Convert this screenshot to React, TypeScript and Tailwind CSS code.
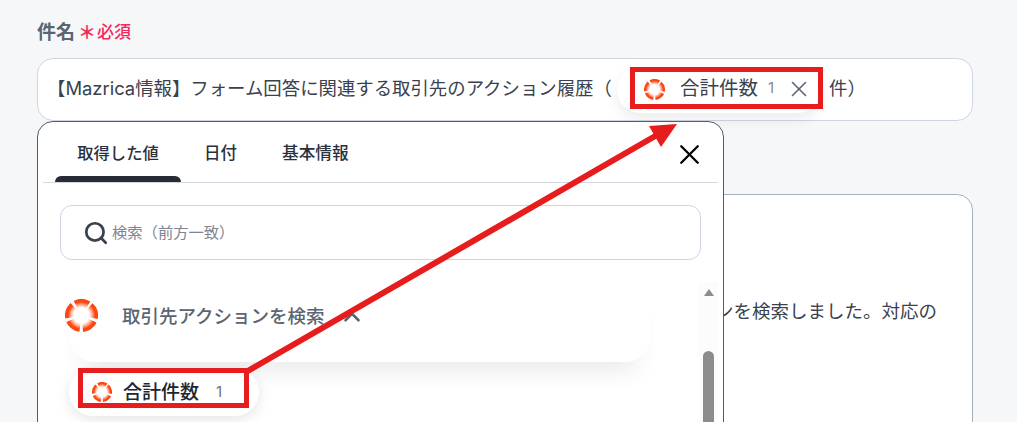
import React from 'react';
import { ChevronUp, Search, X } from 'lucide-react';

const Logo: React.FC<{ size: number; id: string }> = ({ size, id }) => (
  <svg width={size} height={size} viewBox="0 0 100 100" className="shrink-0">
    <defs>
      <radialGradient id={id} gradientUnits="userSpaceOnUse" cx="50" cy="50" r="50">
        <stop offset="0.5" stopColor="#fff3ee" />
        <stop offset="0.66" stopColor="#ffa88e" />
        <stop offset="0.82" stopColor="#ff4510" />
      </radialGradient>
    </defs>
    <circle
      cx="50"
      cy="50"
      r="37"
      fill="none"
      stroke={`url(#${id})`}
      strokeWidth="26"
      strokeDasharray="38.5 8"
      transform="rotate(-48 50 50)"
    />
  </svg>
);

const App: React.FC = () => {
  return (
    <div className="relative h-[422px] w-[1017px] overflow-hidden bg-[#f6f7f9] pl-[37px] pr-[44px] pt-[19px] font-['Inter','Noto_Sans_CJK_JP',sans-serif] text-[#39414e]">
      <div className="flex h-[28px] items-center">
        <span className="text-[19px] font-bold text-[#5b6472]">件名</span>
        <span className="ml-[3px] text-[18px] font-bold leading-none text-[#f5285a]">＊</span>
        <span className="ml-[1px] text-[17px] font-medium text-[#f5285a]">必須</span>
      </div>

      <div className="mt-[11px] flex h-[63px] items-center rounded-[16px] border border-[#cfd5e1] bg-white pl-[9px]">
        <span className="mb-[2px] w-[570px] whitespace-nowrap text-[18.4px]">【Mazrica情報】フォーム回答に関連する取引先のアクション履歴（</span>
        <div className="flex h-[46px] w-[204px] items-center rounded-full bg-white pl-[27px] shadow-[0_6px_14px_rgba(0,0,0,0.08)]">
          <Logo size={21} id="logo-top" />
          <span className="mb-[2px] ml-[15px] text-[19.5px] leading-none">合計件数</span>
          <span className="mb-[2px] ml-[10px] text-[15px] text-[#828a96]">1</span>
          <X size={26} strokeWidth={1.5} className="mb-[2px] ml-[12px] text-[#5b6472]" />
        </div>
        <span className="mb-[2px] ml-[8px] whitespace-nowrap text-[18.4px]">件）</span>
      </div>

      {/* next field, mostly under the popup */}
      <div className="mt-[73px] h-[300px] rounded-[16px] border border-[#a9b0bd] bg-white pr-[35px] pt-[103px] text-right">
        <p className="overflow-hidden whitespace-nowrap text-[18.5px]">アクションを検索しました。対応の</p>
      </div>

      {/* popup */}
      <div className="absolute left-[37px] top-[121px] h-[320px] w-[687px] rounded-[16px] border border-[#545c6a] bg-white">
        <div className="relative mx-[5px] flex h-[61px] items-center border-b border-[#d3d8e1] pl-[12px]">
          <div className="relative flex h-full w-[126px] items-center justify-center">
            <span className="mt-[3px] text-[16.3px] font-medium text-[#2a303b]">取得した値</span>
            <div className="absolute bottom-0 left-0 h-[6px] w-full rounded-t-[6px] bg-[#262b35]" />
          </div>
          <span className="ml-[23px] mt-[3px] text-[16.5px] font-medium text-[#2a303b]">日付</span>
          <span className="ml-[45px] mt-[3px] text-[16.7px] font-medium text-[#2a303b]">基本情報</span>
          <X size={33} strokeWidth={1.7} className="absolute right-[12px] top-[16px] text-black" />
        </div>

        <div className="mx-[22px] mt-[22px] flex h-[55px] items-center rounded-[12px] border border-[#cfd5e1] pl-[22px]">
          <Search size={26} strokeWidth={2.5} className="text-[#39414e]" />
          <span className="ml-[3px] mt-[2px] text-[15.3px] text-[#7d8591]">検索（前方一致）</span>
        </div>

        <div className="mt-[22px] flex">
          <div className="relative w-[661px]">
            <div className="ml-[32px] h-[80px] w-[580px] rounded-b-[24px] bg-white shadow-[0_22px_26px_-14px_rgba(0,0,0,0.09)]">
              <div className="-ml-[5px] flex items-center pt-[17px]">
                <Logo size={33} id="logo-group" />
                <span className="ml-[24px] mt-[2px] text-[18.5px] font-medium text-[#5b6472]">取引先アクションを検索</span>
                <ChevronUp size={26} strokeWidth={2.4} className="ml-[14px] mt-[2px] text-[#5b6472]" />
              </div>
            </div>
            <div className="ml-[31px] mt-[6px] flex h-[48px] w-[190px] items-center rounded-full bg-white pl-[23px] shadow-[0_4px_14px_rgba(0,0,0,0.1)]">
              <Logo size={20} id="logo-item" />
              <span className="ml-[11px] text-[19px] font-medium leading-none text-[#20252e]">合計件数</span>
              <span className="ml-[17px] text-[15px] text-[#6b7380]">1</span>
            </div>
          </div>
          <div className="flex w-[19px] flex-col items-center bg-[#fcfcfc] pt-[7px]">
            <div className="h-0 w-0 border-x-[5px] border-b-[7px] border-x-transparent border-b-[#8c8c8c]" />
            <div className="mt-[55px] h-[120px] w-[11px] rounded-full bg-[#8c8c8c]" />
          </div>
        </div>
      </div>

      {/* red annotations */}
      <div className="absolute left-[630px] top-[67px] h-[42px] w-[193px] border-[5px] border-[#e71c1c]" />
      <div className="absolute left-[78px] top-[368px] h-[40px] w-[171px] border-[5px] border-[#e71c1c]" />
      <svg className="absolute left-0 top-0" width="1017" height="422" viewBox="0 0 1017 422">
        <line x1="246" y1="372" x2="657" y2="135" stroke="#e71c1c" strokeWidth="6" />
        <polygon points="677,124 649,126 661,147" fill="#e71c1c" />
      </svg>
    </div>
  );
};

export default App;
